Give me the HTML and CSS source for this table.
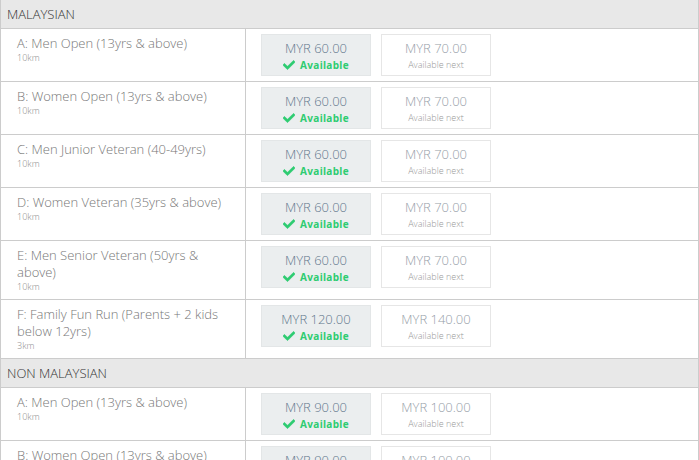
FILE: index.html
```html
<!DOCTYPE html>
<html>
<head>
<meta charset="utf-8">
<link rel="stylesheet" href="styles.css">
</head>
<body>
<table class="prices">
  <colgroup><col class="c1"><col class="c2"></colgroup>
  <tr class="group"><td colspan="2">MALAYSIAN</td></tr>
  <tr>
    <td class="cat"><div class="name">A: Men Open (13yrs &amp; above)</div><div class="dist">10km</div></td>
    <td class="opts"><div class="boxes">
      <div class="box now"><div class="amt">MYR 60.00</div><div class="st"><svg viewBox="0 0 512 512"><path d="M173.9 439.4l-166.4-166.4c-10-10-10-26.2 0-36.2l36.2-36.2c10-10 26.2-10 36.2 0L192 312.7 432.1 72.6c10-10 26.2-10 36.2 0l36.2 36.2c10 10 10 26.2 0 36.2l-294.4 294.4c-10 10-26.2 10-36.2 0z"/></svg>Available</div></div>
      <div class="box next"><div class="amt">MYR 70.00</div><div class="st">Available next</div></div>
    </div></td>
  </tr>
  <tr>
    <td class="cat"><div class="name">B: Women Open (13yrs &amp; above)</div><div class="dist">10km</div></td>
    <td class="opts"><div class="boxes">
      <div class="box now"><div class="amt">MYR 60.00</div><div class="st"><svg viewBox="0 0 512 512"><path d="M173.9 439.4l-166.4-166.4c-10-10-10-26.2 0-36.2l36.2-36.2c10-10 26.2-10 36.2 0L192 312.7 432.1 72.6c10-10 26.2-10 36.2 0l36.2 36.2c10 10 10 26.2 0 36.2l-294.4 294.4c-10 10-26.2 10-36.2 0z"/></svg>Available</div></div>
      <div class="box next"><div class="amt">MYR 70.00</div><div class="st">Available next</div></div>
    </div></td>
  </tr>
  <tr>
    <td class="cat"><div class="name">C: Men Junior Veteran (40-49yrs)</div><div class="dist">10km</div></td>
    <td class="opts"><div class="boxes">
      <div class="box now"><div class="amt">MYR 60.00</div><div class="st"><svg viewBox="0 0 512 512"><path d="M173.9 439.4l-166.4-166.4c-10-10-10-26.2 0-36.2l36.2-36.2c10-10 26.2-10 36.2 0L192 312.7 432.1 72.6c10-10 26.2-10 36.2 0l36.2 36.2c10 10 10 26.2 0 36.2l-294.4 294.4c-10 10-26.2 10-36.2 0z"/></svg>Available</div></div>
      <div class="box next"><div class="amt">MYR 70.00</div><div class="st">Available next</div></div>
    </div></td>
  </tr>
  <tr>
    <td class="cat"><div class="name">D: Women Veteran (35yrs &amp; above)</div><div class="dist">10km</div></td>
    <td class="opts"><div class="boxes">
      <div class="box now"><div class="amt">MYR 60.00</div><div class="st"><svg viewBox="0 0 512 512"><path d="M173.9 439.4l-166.4-166.4c-10-10-10-26.2 0-36.2l36.2-36.2c10-10 26.2-10 36.2 0L192 312.7 432.1 72.6c10-10 26.2-10 36.2 0l36.2 36.2c10 10 10 26.2 0 36.2l-294.4 294.4c-10 10-26.2 10-36.2 0z"/></svg>Available</div></div>
      <div class="box next"><div class="amt">MYR 70.00</div><div class="st">Available next</div></div>
    </div></td>
  </tr>
  <tr>
    <td class="cat"><div class="name">E: Men Senior Veteran (50yrs &amp; above)</div><div class="dist">10km</div></td>
    <td class="opts"><div class="boxes">
      <div class="box now"><div class="amt">MYR 60.00</div><div class="st"><svg viewBox="0 0 512 512"><path d="M173.9 439.4l-166.4-166.4c-10-10-10-26.2 0-36.2l36.2-36.2c10-10 26.2-10 36.2 0L192 312.7 432.1 72.6c10-10 26.2-10 36.2 0l36.2 36.2c10 10 10 26.2 0 36.2l-294.4 294.4c-10 10-26.2 10-36.2 0z"/></svg>Available</div></div>
      <div class="box next"><div class="amt">MYR 70.00</div><div class="st">Available next</div></div>
    </div></td>
  </tr>
  <tr>
    <td class="cat"><div class="name">F: Family Fun Run (Parents + 2 kids below 12yrs)</div><div class="dist">3km</div></td>
    <td class="opts"><div class="boxes">
      <div class="box now"><div class="amt">MYR 120.00</div><div class="st"><svg viewBox="0 0 512 512"><path d="M173.9 439.4l-166.4-166.4c-10-10-10-26.2 0-36.2l36.2-36.2c10-10 26.2-10 36.2 0L192 312.7 432.1 72.6c10-10 26.2-10 36.2 0l36.2 36.2c10 10 10 26.2 0 36.2l-294.4 294.4c-10 10-26.2 10-36.2 0z"/></svg>Available</div></div>
      <div class="box next"><div class="amt">MYR 140.00</div><div class="st">Available next</div></div>
    </div></td>
  </tr>
  <tr class="group"><td colspan="2">NON MALAYSIAN</td></tr>
  <tr>
    <td class="cat"><div class="name">A: Men Open (13yrs &amp; above)</div><div class="dist">10km</div></td>
    <td class="opts"><div class="boxes">
      <div class="box now"><div class="amt">MYR 90.00</div><div class="st"><svg viewBox="0 0 512 512"><path d="M173.9 439.4l-166.4-166.4c-10-10-10-26.2 0-36.2l36.2-36.2c10-10 26.2-10 36.2 0L192 312.7 432.1 72.6c10-10 26.2-10 36.2 0l36.2 36.2c10 10 10 26.2 0 36.2l-294.4 294.4c-10 10-26.2 10-36.2 0z"/></svg>Available</div></div>
      <div class="box next"><div class="amt">MYR 100.00</div><div class="st">Available next</div></div>
    </div></td>
  </tr>
  <tr>
    <td class="cat"><div class="name">B: Women Open (13yrs &amp; above)</div><div class="dist">10km</div></td>
    <td class="opts"><div class="boxes">
      <div class="box now"><div class="amt">MYR 90.00</div><div class="st"><svg viewBox="0 0 512 512"><path d="M173.9 439.4l-166.4-166.4c-10-10-10-26.2 0-36.2l36.2-36.2c10-10 26.2-10 36.2 0L192 312.7 432.1 72.6c10-10 26.2-10 36.2 0l36.2 36.2c10 10 10 26.2 0 36.2l-294.4 294.4c-10 10-26.2 10-36.2 0z"/></svg>Available</div></div>
      <div class="box next"><div class="amt">MYR 100.00</div><div class="st">Available next</div></div>
    </div></td>
  </tr>
</table>
</body>
</html>
```

FILE: styles.css
```css
html, body {
  margin: 0;
  padding: 0;
  background: #fff;
}
body {
  font-family: "Open Sans", "Liberation Sans", sans-serif;
  font-weight: 300;
  width: 699px;
  overflow: hidden;
}
.prices {
  width: 699px;
  border-collapse: collapse;
  table-layout: fixed;
  margin-top: -1px;
}
.c1 { width: 245px; }
.prices td {
  border: 1px solid #cccccc;
  vertical-align: top;
  padding: 0;
}
.group td {
  background: #e8e8e8;
  color: #333;
  font-size: 13px;
  height: 28px;
  line-height: 28px;
  padding: 0 6px;
  vertical-align: middle;
}
.cat {
  padding: 6px 15px 6px 16px !important;
}
.name {
  font-size: 13px;
  line-height: 17px;
  color: #777;
}
.dist {
  font-size: 9px;
  line-height: 12px;
  color: #888;
}
.opts {
  padding: 5px 15px 5px 15px !important;
}
.boxes {
  display: flex;
  gap: 10px;
}
.box {
  width: 110px;
  height: 42px;
  box-sizing: border-box;
  text-align: center;
  padding-top: 5px;
}
.box.now {
  background: #ebeeef;
  border: 1px solid #e3e6e7;
}
.box.next {
  background: #fff;
  border: 1px solid #e6e6e6;
}
.amt {
  font-size: 13px;
  line-height: 17px;
  color: #62778c;
}
.next .amt {
  color: #969ea8;
}
.st {
  font-size: 10px;
  line-height: 14px;
  display: flex;
  justify-content: center;
  align-items: center;
  gap: 5px;
}
.now .st {
  color: #2ecc71;
  font-weight: 700;
  letter-spacing: 0.3px;
  margin-top: 1px;
}
.now .st svg {
  width: 12px;
  height: 12px;
  fill: #2ecc71;
  stroke: #2ecc71;
  stroke-width: 20;
}
.next .st {
  font-size: 9px;
  color: #999;
  margin-top: 1px;
}
```
